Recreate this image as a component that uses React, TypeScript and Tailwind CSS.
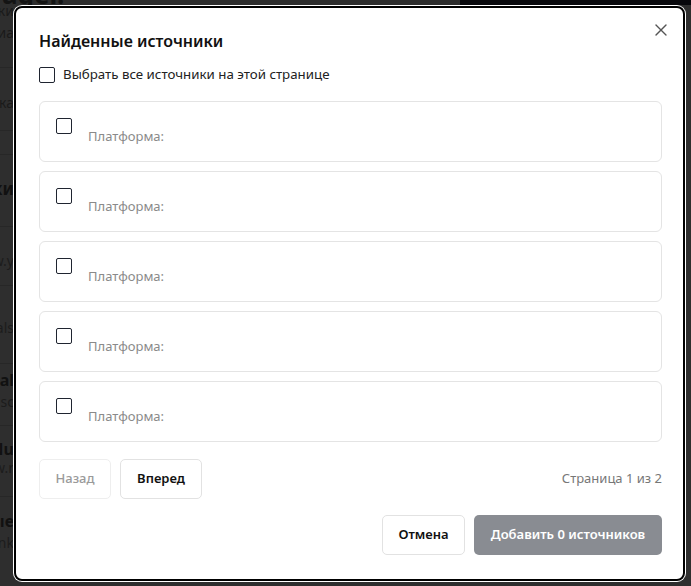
import { X } from "lucide-react";

const sources = [1, 2, 3, 4, 5];

function Checkbox() {
  return <span className="block h-4 w-4 shrink-0 rounded-[2px] border-[1.5px] border-[#1f2430] bg-white" />;
}

function BackgroundPage() {
  // страница под затемнением: видны только обрывки слева
  return (
    <div className="h-[586px] w-full overflow-hidden bg-[#2e2e2e]">
      <div className="flex h-[5px] overflow-hidden">
        <div className="flex-1 overflow-hidden">
          <span className="-mt-[19px] block whitespace-nowrap pl-[2px] text-[26px] font-bold leading-[26px] text-[#141414]">ager.</span>
        </div>
        <div className="w-[231px] bg-[#08080c]" />
      </div>
      <div className="w-[14px] overflow-hidden text-[14px] text-[#1a1a1a]">
        <div className="flex h-[16px] items-end justify-end whitespace-nowrap">Источники</div>
        <div className="flex h-[22px] items-end justify-end whitespace-nowrap">Медиа</div>
        <div className="h-[25px] border-b border-[#272727]" />
        <div className="flex h-[48px] items-end justify-end whitespace-nowrap pb-[3px]">Ссылка</div>
        <div className="h-[15px] border-b border-[#272727]" />
        <div className="h-[24px] border-b border-[#272727]" />
        <div className="flex h-[48px] items-end justify-end whitespace-nowrap pb-[2px] text-[17px] font-bold text-[#111]">Источники</div>
        <div className="h-[24px] border-b border-[#272727]" />
        <div className="flex h-[45px] items-end justify-end whitespace-nowrap pb-[1px] text-[#1c1c1c]">www.y</div>
        <div className="h-[14px] border-b border-[#272727]" />
        <div className="flex h-[54px] items-end justify-end whitespace-nowrap pb-[2px] text-[#1c1c1c]">Materials</div>
        <div className="h-[24px] border-b border-[#272727]" />
        <div className="flex h-[28px] items-end justify-end whitespace-nowrap text-[16px] font-bold text-[#111]">Journal</div>
        <div className="flex h-[20px] items-end justify-end whitespace-nowrap text-[#1c1c1c]">sc</div>
        <div className="h-[14px] border-b border-[#272727]" />
        <div className="flex h-[35px] items-end justify-end whitespace-nowrap text-[16px] font-bold text-[#111]">Nu</div>
        <div className="flex h-[17px] items-end justify-end whitespace-nowrap text-[#1c1c1c]">www.r</div>
        <div className="h-[19px] border-b border-[#272727]" />
        <div className="flex h-[36px] items-end justify-end whitespace-nowrap text-[16px] font-bold text-[#111]">Новые</div>
        <div className="flex h-[20px] items-end justify-end whitespace-nowrap text-[#1c1c1c]">link</div>
      </div>
    </div>
  );
}

export default function App() {
  return (
    <div className="relative h-[586px] w-[691px] overflow-hidden" style={{ fontFamily: '"Noto Sans", "Open Sans", sans-serif' }}>
      <BackgroundPage />
      <div className="absolute left-[14px] top-[6px] w-[671px] rounded-[8px] border-2 border-black bg-white pb-6 pl-[23px] pr-[21px] pt-[21px] ring-1 ring-white">
        <button type="button" className="absolute right-[12px] top-[12px] flex h-5 w-5 items-center justify-center text-[#555]">
          <X size={20} strokeWidth={1.6} />
        </button>
        <h2 className="text-[16px] font-semibold leading-6 text-[#111]">Найденные источники</h2>
        <label className="mt-3 flex h-5 items-center gap-2 text-[13.3px] text-[#222]">
          <Checkbox />
          <span>Выбрать все источники на этой странице</span>
        </label>
        <div className="mt-4 flex flex-col gap-[9px]">
          {sources.map((id) => (
            <div key={id} className="flex gap-4 rounded-[6px] border border-[#e4e4e4] p-4">
              <Checkbox />
              <div className="pt-[9px] text-[13px] leading-[18px] text-[#8a8a8a]">Платформа:</div>
            </div>
          ))}
        </div>
        <div className="mt-[17px] flex items-center justify-between">
          <div className="flex gap-[9px]">
            <button type="button" disabled className="h-[40px] w-[72px] rounded-[5px] border border-[#eeeeee] text-[13px] font-medium text-[#9a9a9a]">
              Назад
            </button>
            <button type="button" className="h-[40px] w-[82px] rounded-[5px] border border-[#e2e2e2] text-[13px] font-semibold text-[#111]">
              Вперед
            </button>
          </div>
          <span className="text-[13px] text-[#777]">Страница 1 из 2</span>
        </div>
        <div className="mt-[16px] flex justify-end gap-[9px]">
          <button type="button" className="h-[40px] w-[83px] rounded-[5px] border border-[#e2e2e2] text-[13px] font-semibold text-[#111]">
            Отмена
          </button>
          <button type="button" disabled className="h-[40px] w-[188px] rounded-[5px] bg-[#898c92] text-[13px] font-semibold text-white">
            Добавить 0 источников
          </button>
        </div>
      </div>
    </div>
  );
}
